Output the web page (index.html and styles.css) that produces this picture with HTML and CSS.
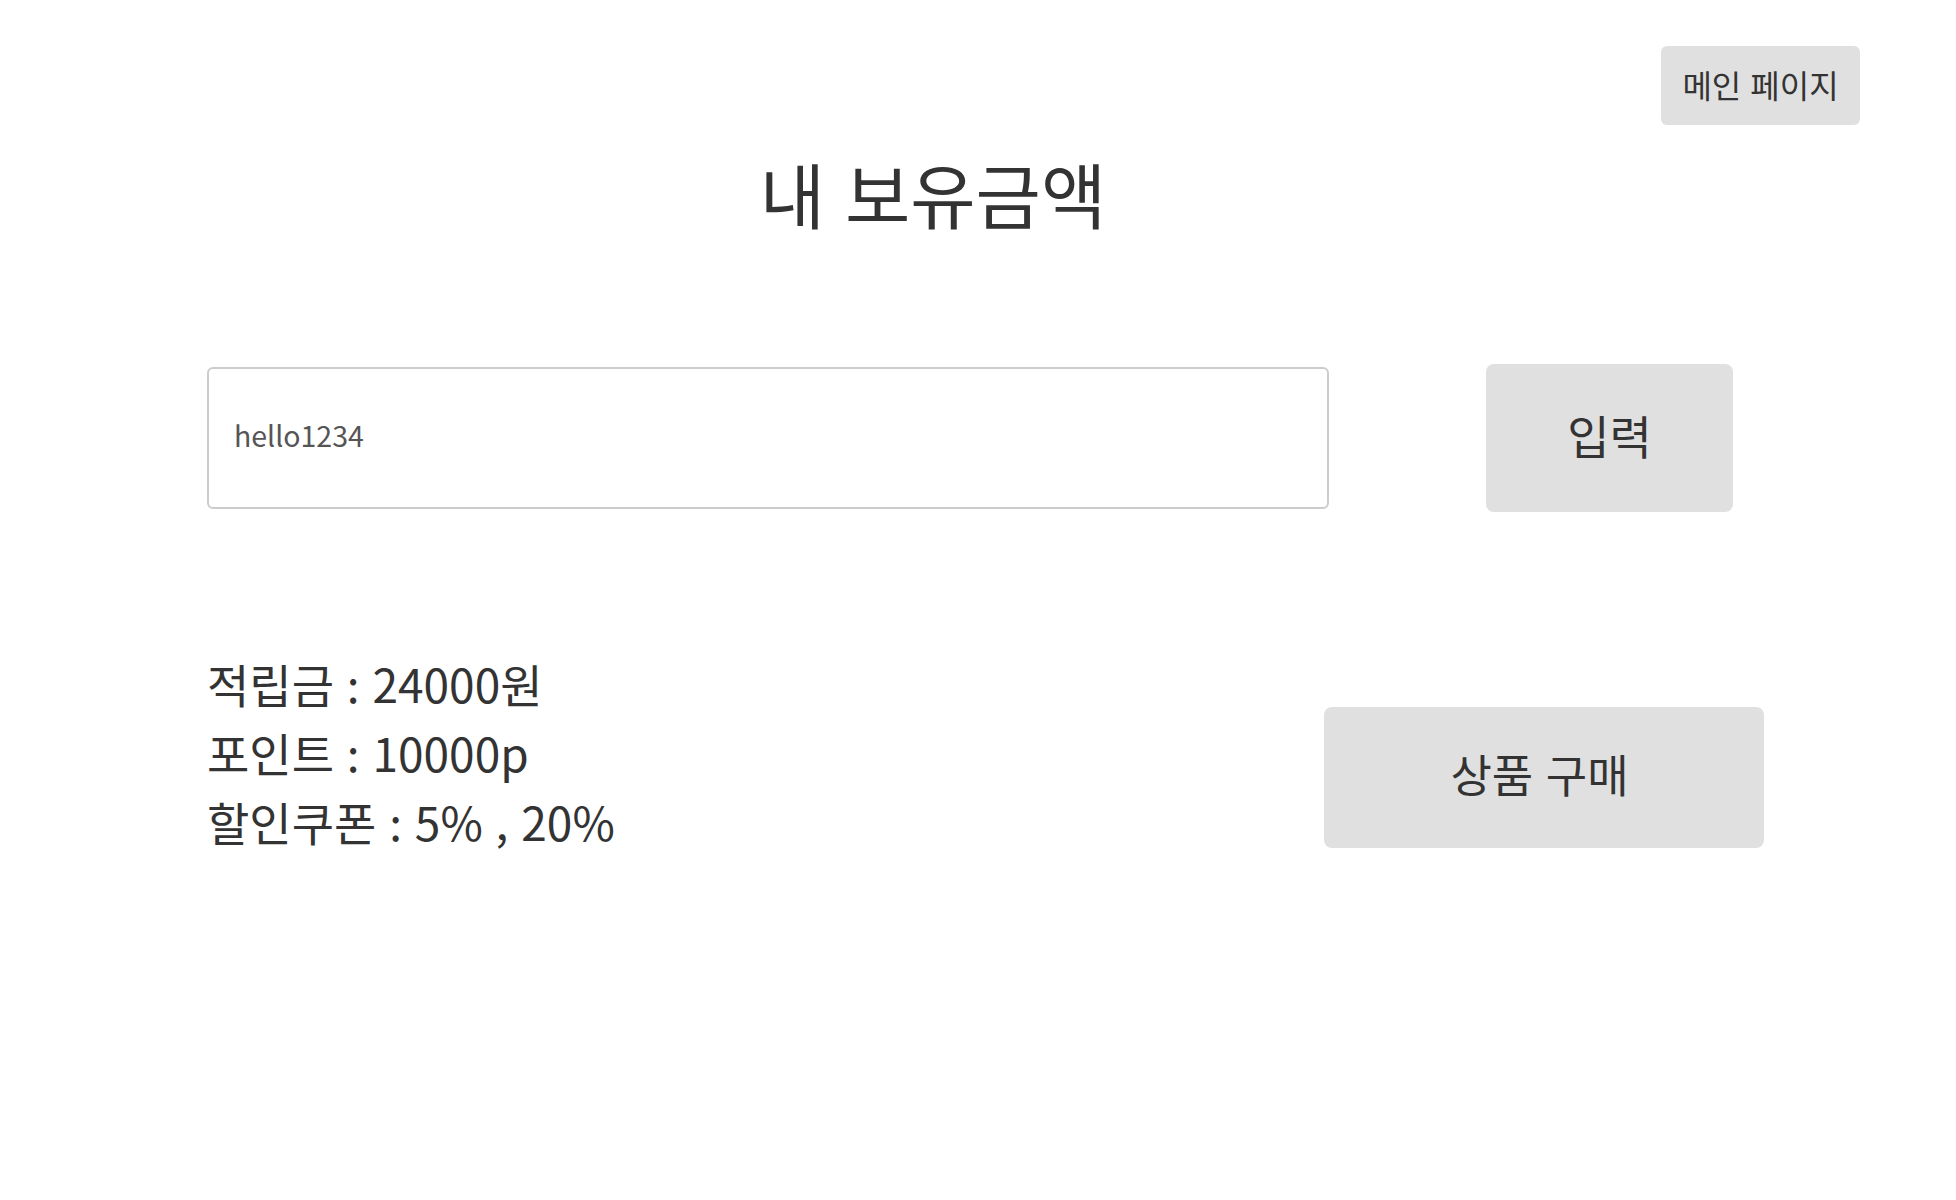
FILE: index.html
```html
<!DOCTYPE html>
<html lang="ko">
<head>
<meta charset="utf-8">
<title>내 보유금액</title>
<link rel="stylesheet" href="styles.css">
</head>
<body>
<div class="page">
  <header class="topbar">
    <button class="main-btn" type="button">메인 페이지</button>
  </header>
  <h1 class="title">내 보유금액</h1>
  <div class="search">
    <input class="id-input" type="text" value="hello1234">
    <button class="enter-btn" type="button">입력</button>
  </div>
  <div class="info">
    <div class="info-text">
      <p>적립금 <span class="colon" lang="en">:</span> 24000원</p>
      <p>포인트 <span class="colon" lang="en">:</span> 10000p</p>
      <p>할인쿠폰 <span class="colon" lang="en">:</span> 5% , 20%</p>
    </div>
    <button class="buy-btn" type="button">상품 구매</button>
  </div>
</div>
</body>
</html>
```

FILE: styles.css
```css
* { box-sizing: border-box; }
html, body { margin: 0; padding: 0; background: #fff; }
body {
  font-family: "Noto Sans CJK KR", "Noto Sans", sans-serif;
  color: #333;
}
button, input { font-family: inherit; }
.page { width: 1956px; }
.topbar {
  display: flex;
  justify-content: flex-end;
  padding: 46px 96px 0 0;
}
.main-btn {
  width: 199px;
  height: 79px;
  border: none;
  border-radius: 6px;
  background: #e0e0e0;
  color: #333;
  font-size: 32px;
  padding: 0 0 4px 0;
}
.title {
  margin: 16px 90px 0 0;
  text-align: center;
  font-size: 71px;
  font-weight: 400;
  line-height: 1.45;
  color: #333;
}
.search {
  display: flex;
  align-items: center;
  padding-left: 207px;
  margin-top: 120px;
}
.id-input {
  width: 1122px;
  height: 142px;
  border: 2px solid #ccc;
  border-radius: 6px;
  padding: 0 0 7px 25px;
  font-size: 28.5px;
  color: #555;
  outline: none;
}
.enter-btn {
  margin-left: 157px;
  width: 247px;
  height: 148px;
  border: none;
  border-radius: 8px;
  background: #e0e0e0;
  color: #333;
  font-size: 46px;
  padding: 0 0 8px 0;
}
.info {
  display: flex;
  align-items: flex-start;
  padding: 0 192px 0 207px;
  margin-top: 137px;
}
.info-text p {
  margin: 0;
  font-size: 46px;
  line-height: 69px;
  color: #333;
}
.colon {
  font-family: "Noto Sans CJK KR", "Noto Sans", sans-serif;
}
.buy-btn {
  margin-left: auto;
  margin-top: 58px;
  width: 440px;
  height: 141px;
  border: none;
  border-radius: 8px;
  background: #e0e0e0;
  color: #333;
  font-size: 45px;
  padding: 0 9px 8px 0;
}
```
